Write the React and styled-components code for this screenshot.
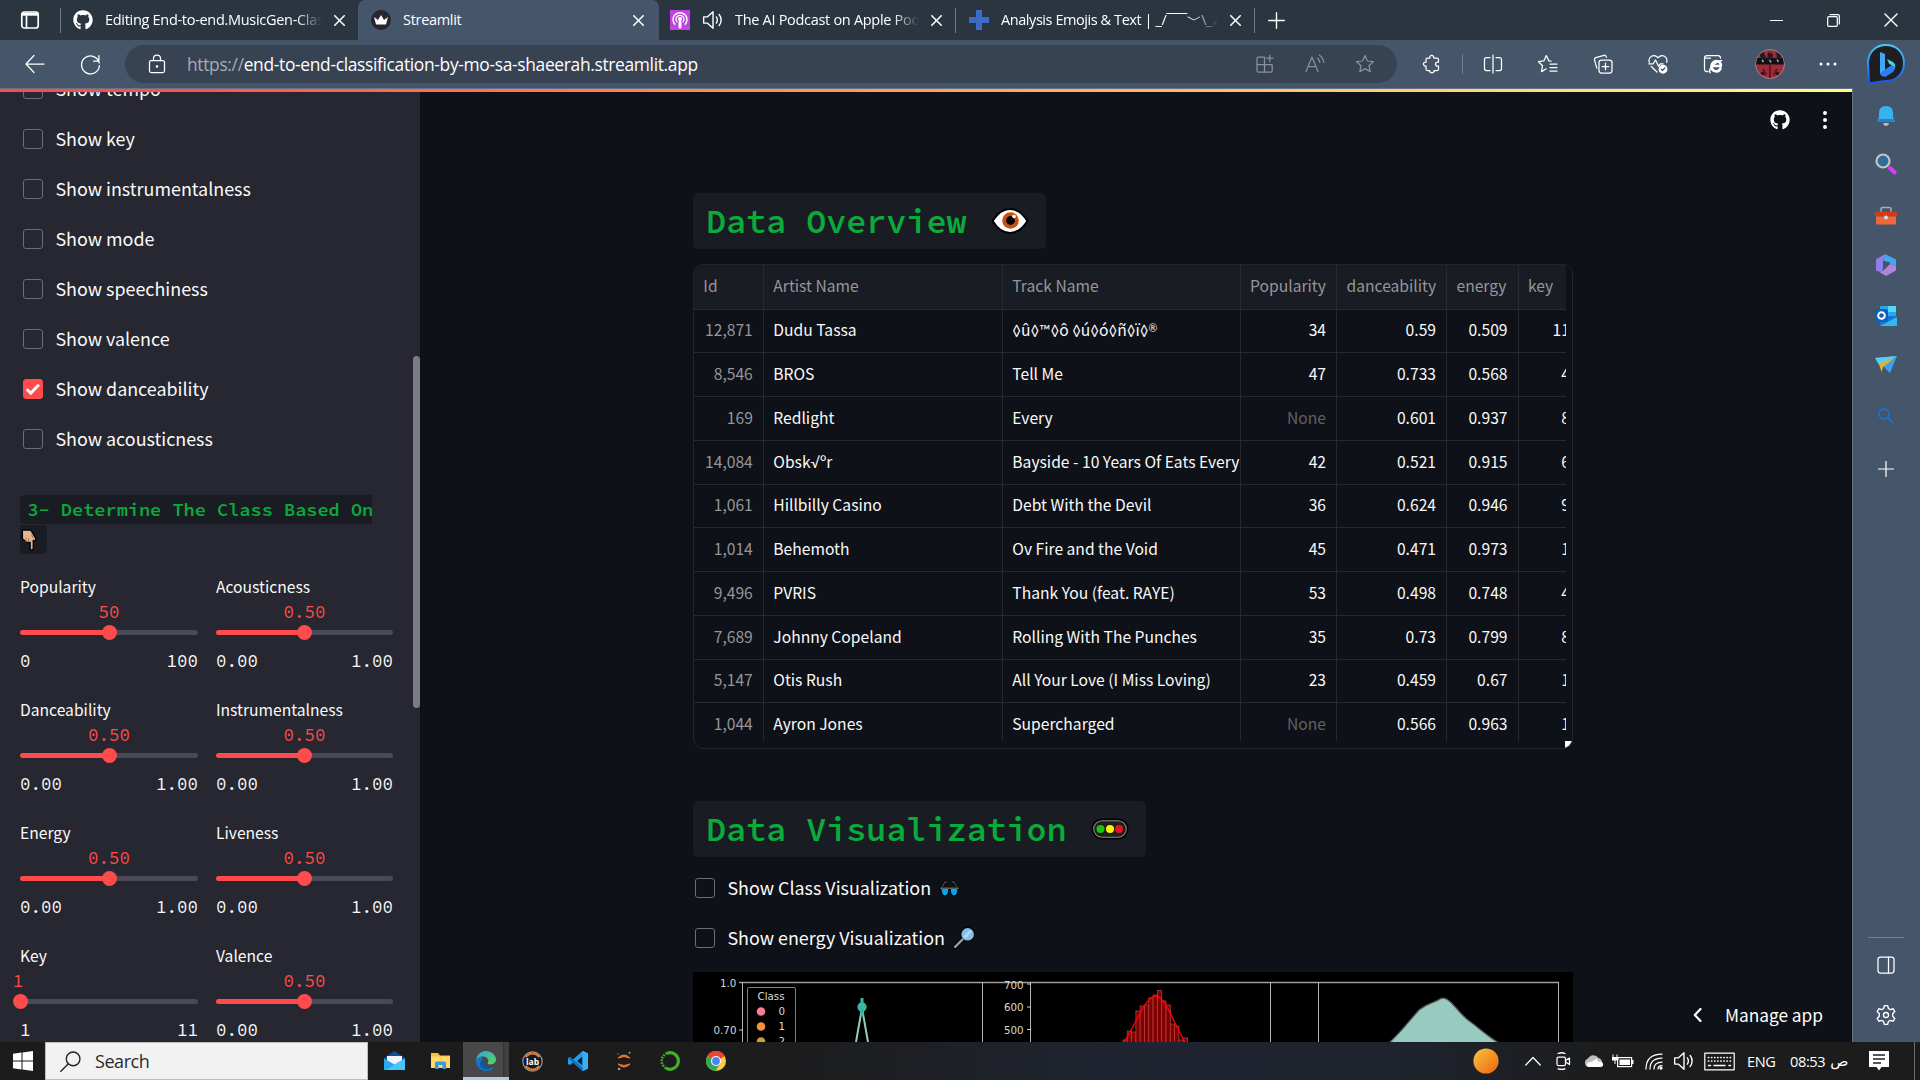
import React from "react";
import styled, { createGlobalStyle } from "styled-components";
import { FaGithub } from "react-icons/fa";

const ui = `"Open Sans", "Noto Sans", sans-serif`;
const sans = `"Noto Sans CJK SC", "Noto Sans", sans-serif`;
const mono = `"Source Code Pro", "Noto Sans Mono CJK SC", "Liberation Mono", monospace`;

const GlobalStyle = createGlobalStyle`
  * { box-sizing: border-box; }
  html, body { margin: 0; padding: 0; background: #0e1117; overflow: hidden; }
  svg { display: block; flex: none; }
`;

const Desktop = styled.div`
  width: 1920px;
  height: 1080px;
  display: grid;
  grid-template-rows: 40px 48px 954px 38px;
  overflow: hidden;
  font-family: ${ui};
  color: #fff;
`;

/* ---------- tab strip ---------- */
const TabStrip = styled.header`
  display: flex;
  align-items: stretch;
  background: #2b3540;
`;
const PinnedArea = styled.div`
  width: 60px;
  display: flex;
  align-items: center;
  padding-left: 20px;
`;
const Tab = styled.div`
  width: ${(p) => p.$w}px;
  padding-left: ${(p) => p.$pad}px;
  padding-right: ${(p) => p.$end}px;
  display: flex;
  align-items: center;
  background: ${(p) => (p.$active ? "#45566a" : "transparent")};
  border-radius: ${(p) => (p.$active ? "7px 7px 0 0" : "0")};
`;
const TabTitle = styled.span`
  flex: 1;
  min-width: 0;
  margin-left: ${(p) => p.$gap || 12}px;
  margin-right: 12px;
  height: 40px;
  line-height: 39px;
  font-size: 14.5px;
  letter-spacing: ${(p) => p.$ls || -0.3}px;
  white-space: nowrap;
  overflow: hidden;
  mask-image: ${(p) => (p.$fade ? "linear-gradient(90deg,#000 calc(100% - 26px),transparent)" : "none")};
`;
const Gap = styled.span`
  width: ${(p) => p.$w || 0}px;
  height: ${(p) => p.$h || 0}px;
  flex: none;
`;
const Separator = styled.i`
  width: 1px;
  height: ${(p) => p.$h || 25}px;
  align-self: center;
  background: #717c88;
`;
const StripFill = styled.div`
  flex: 1;
`;
const WindowButton = styled.div`
  width: ${(p) => p.$w || 57.5}px;
  display: flex;
  align-items: center;
  justify-content: center;
`;

/* ---------- toolbar ---------- */
const Toolbar = styled.nav`
  display: flex;
  align-items: center;
  background: #45566a;
`;
const ToolSlot = styled.div`
  width: ${(p) => p.$w || 55}px;
  height: 48px;
  display: flex;
  align-items: center;
  justify-content: center;
`;
const AddressBar = styled.div`
  width: 1272px;
  height: 38px;
  border-radius: 19px;
  background: #374253;
  display: flex;
  align-items: center;
  padding-left: 22px;
`;
const Url = styled.span`
  flex: 1;
  margin-left: 20px;
  font-size: 17.4px;
  line-height: 35px;
  letter-spacing: -0.33px;
  white-space: nowrap;
`;
const UrlScheme = styled.span`
  color: #a5adb6;
`;

/* ---------- page frame ---------- */
const Body = styled.div`
  display: grid;
  grid-template-columns: 1853px 67px;
  min-height: 0;
`;
const Page = styled.div`
  position: relative;
  display: flex;
  flex-direction: column;
  min-height: 0;
  border-top: 1px solid #66727f;
  border-right: 1px solid #66727f;
  background: #0e1117;
  overflow: hidden;
`;
const Decoration = styled.div`
  flex: none;
  height: 3px;
  background: linear-gradient(90deg, #ff4b4b, #ff4b4b 6%, #fffd80);
`;
const Columns = styled.div`
  flex: 1;
  min-height: 0;
  display: flex;
`;
const Sidebar = styled.aside`
  width: 420px;
  display: flex;
  justify-content: space-between;
  background: #262730;
  overflow: hidden;
  font-family: ${sans};
  color: #fafafa;
`;
const SidebarScroll = styled.div`
  width: 400px;
  padding-left: 20px;
  margin-top: -28px;
`;
const Scrollbar = styled.div`
  width: 7px;
  height: 352px;
  margin-top: 264px;
  border-radius: 4px;
  background: #7c7b83;
`;
const CheckRow = styled.label`
  height: 50px;
  display: flex;
  align-items: center;
  padding-left: ${(p) => (p.$main ? 2 : 3)}px;
  font-family: ${sans};
  font-size: 17.9px;
  line-height: 24px;
  white-space: nowrap;
  color: #fafafa;
`;
const CheckText = styled.span`
  margin: -3px 8px 0 12.4px;
`;
const Box = styled.span`
  width: 20px;
  height: 20px;
  border-radius: 3px;
  border: 1px solid ${(p) => (p.$on ? "#ff4b4b" : "#6c6d76")};
  background: ${(p) => (p.$on ? "#ff4b4b" : "transparent")};
  display: flex;
  align-items: center;
  justify-content: center;
`;
const SideHeading = styled.h3`
  margin: 31px 0 0;
  font-family: ${mono};
  font-size: 18.6px;
  font-weight: 600;
  line-height: 30px;
  color: #09ab3b;
`;
const SideCode = styled.div`
  width: ${(p) => p.$w}px;
  height: 29px;
  padding-left: ${(p) => p.$pad}px;
  margin-bottom: 1px;
  display: flex;
  align-items: center;
  background: #1a1c24;
  border-radius: ${(p) => p.$r};
  white-space: pre;
`;
const SliderGrid = styled.div`
  margin-top: 17px;
  display: grid;
  grid-template-columns: 178px 177px;
  column-gap: 18px;
`;
const Slider = styled.div`
  height: 123px;
  display: flex;
  flex-direction: column;
`;
const SliderLabel = styled.div`
  font-size: 15.65px;
  line-height: 31.6px;
  height: 30.4px;
`;
const SliderValue = styled.div`
  font-family: ${mono};
  font-size: 17.5px;
  line-height: 22px;
  height: 16.8px;
  color: #ff4b4b;
  width: 60px;
  text-align: center;
  margin-left: calc(${(p) => p.$at}% - ${(p) => (p.$at ? 30 : 32)}px);
`;
const Track = styled.div`
  height: 16px;
  margin-top: 6px;
  display: flex;
  align-items: center;
`;
const TrackPart = styled.i`
  height: 5px;
  width: ${(p) => p.$w}%;
  background: ${(p) => (p.$on ? "#ff4b4b" : "#494a55")};
  border-radius: 3px;
`;
const Thumb = styled.i`
  flex: none;
  width: 15px;
  height: 15px;
  margin: 0 -7.5px;
  border-radius: 50%;
  background: #ff4b4b;
  z-index: 1;
`;
const Range = styled.div`
  display: flex;
  justify-content: space-between;
  margin-top: 9px;
  font-family: ${mono};
  font-size: 17.5px;
  line-height: 24px;
`;

/* ---------- main ---------- */
const Main = styled.main`
  flex: 1;
  min-width: 0;
  display: flex;
  flex-direction: column;
  padding-left: 273px;
`;
const AppHeader = styled.div`
  flex: none;
  height: 101px;
  display: flex;
  justify-content: flex-end;
  gap: 16px;
  padding: 17px 20px 0 0;
`;
const HeaderIcon = styled.div`
  width: ${(p) => p.$w}px;
  height: 22px;
  display: flex;
  align-items: center;
  justify-content: center;
`;
const Title = styled.h2`
  flex: none;
  margin: 0;
  width: ${(p) => p.$w}px;
  height: 56px;
  padding: 0 17px 0 13px;
  display: flex;
  align-items: center;
  justify-content: space-between;
  background: #1a1c24;
  border-radius: 5px;
  font-family: ${mono};
  font-size: 33.4px;
  font-weight: 600;
  color: #09ab3b;
  white-space: nowrap;
`;
const TableFrame = styled.div`
  flex: none;
  position: relative;
  width: 880px;
  height: 485px;
  margin: 15px 0 52px;
  padding-right: 7px;
  border: 1px solid #23252c;
  border-radius: 10px;
  overflow: hidden;
`;
const Grid = styled.div`
  width: 872px;
  height: 476px;
  overflow: hidden;
  display: grid;
  grid-template-columns: 70px 239px 237.8px 96.4px 110px 71.5px 47.3px;
  grid-template-rows: 44.6px repeat(10, 43.75px);
  font-family: ${sans};
  font-size: 15.65px;
`;
const Cell = styled.div`
  display: flex;
  align-items: center;
  justify-content: ${(p) => (p.$num ? "flex-end" : "flex-start")};
  padding: 0 ${(p) => (p.$last ? 0 : p.$num ? 10.2 : 0)}px 2.4px ${(p) => (p.$last && p.$num ? 0 : 9.3)}px;
  margin-right: ${(p) => (p.$last && p.$num ? -4 : 0)}px;
  border-right: ${(p) => (p.$last ? "none" : "1px solid #27292f")};
  border-bottom: 1px solid #27292f;
  background: ${(p) => (p.$head ? "#1a1c24" : "transparent")};
  color: ${(p) => (p.$head || p.$dim ? "#95969b" : p.$none ? "#5f6167" : "#fafafa")};
  white-space: pre;
  overflow: hidden;
`;
const Sym = styled.span`
  font-family: "Lato", "Open Sans", sans-serif;
  font-size: ${(p) => (p.$raised ? 10.5 : 15)}px;
  vertical-align: ${(p) => (p.$raised ? "4px" : "baseline")};
  line-height: 1;
`;
const ResizeCorner = styled.i`
  position: absolute;
  right: 0;
  bottom: 0;
  width: 7px;
  height: 7px;
  background: linear-gradient(135deg, #fff 60%, transparent 60%);
`;
const Figure = styled.div`
  flex: none;
  margin-top: 9px;
  width: 880px;
  height: 70px;
  background: #000;
  overflow: hidden;
`;
const ManageApp = styled.div`
  position: absolute;
  right: 29px;
  bottom: 12px;
  height: 30px;
  display: flex;
  align-items: center;
  gap: 23px;
  font-family: ${sans};
  font-size: 17.3px;
  line-height: 28px;
`;

/* ---------- right rail ---------- */
const Rail = styled.aside`
  display: flex;
  flex-direction: column;
  align-items: center;
  padding-right: 1px;
  background: #45566a;
`;
const RailItem = styled.div`
  height: ${(p) => p.$h || 24}px;
  margin-top: ${(p) => p.$mt || 0}px;
  display: flex;
  align-items: center;
`;
const RailFill = styled.div`
  flex: 1;
`;
const RailRule = styled.i`
  width: 36px;
  height: 1px;
  background: #76838f;
`;

/* ---------- taskbar ---------- */
const Taskbar = styled.footer`
  display: flex;
  align-items: stretch;
  background: linear-gradient(90deg, #1c1c1c 0, #1c1c1c 40%, #1f2430 58%, #1e232e 72%, #1c1c1c 84%);
`;
const TaskItem = styled.div`
  flex: none;
  width: ${(p) => p.$w || 46}px;
  display: flex;
  align-items: center;
  justify-content: center;
  background: ${(p) => (p.$active ? "linear-gradient(90deg,#484848 40px,#303030 40px,#404040 42px)" : "transparent")};
  border-bottom: ${(p) => (p.$active ? "3px solid #a9cbee" : "0 solid transparent")};
  padding-top: ${(p) => (p.$active ? 3 : 0)}px;
`;
const SearchField = styled.div`
  width: 323px;
  display: flex;
  align-items: center;
  gap: 14px;
  padding-left: 14px;
  background: #f2f2f2;
  border: 1px solid #bdbdbd;
  color: #2b2b2b;
  font-size: 18px;
  letter-spacing: -0.45px;
`;
const TrayText = styled.span`
  flex: none;
  width: ${(p) => p.$w}px;
  display: flex;
  align-items: center;
  gap: 5px;
  font-size: 14.6px;
  letter-spacing: -0.4px;
  white-space: nowrap;
`;
const Arabic = styled.span`
  font-family: "DejaVu Sans", sans-serif;
  font-size: 15px;
`;
const Notifications = styled.div`
  display: flex;
  align-items: center;
  margin-right: 25px;
`;
const ShowDesktop = styled.div`
  width: 6px;
  border-left: 1px solid #6b6b6b;
`;

/* ---------- icons ---------- */
const Ico = ({ s = 20, w, vb = "0 0 20 20", sw = 1.25, c = "#fff", children }) => (
  <svg width={w || s} height={s} viewBox={vb} fill="none" stroke={c} strokeWidth={sw} strokeLinecap="round" strokeLinejoin="round">
    {children}
  </svg>
);
const CloseX = ({ s = 11, sw = 1.4 }) => <Ico s={s} vb="0 0 10 10" sw={sw}><path d="M.7.7l8.6 8.6M9.3.7L.7 9.3" /></Ico>;
const Speaker = () => (
  <Ico s={22}><path d="M1.5 7.2v5.6h3.3l5.2 4.7v-15L4.8 7.2zM13 7.2c1.2 1.7 1.2 4 0 5.6M15.6 5c2.4 2.9 2.4 7.1 0 10" /></Ico>
);
const GridPlus = () => (
  <Ico c="#8a919b"><path d="M2 4.2q0-1.2 1.2-1.2H9.5v15H3.2Q2 18 2 16.800zM2 10.500h15.200M9.500 10.500h6.500q1.200 0 1.200 1.200v5.100q0 1.200-1.200 1.200H9.500M14.800 1v6.500M11.500 4.200h6.500" /></Ico>
);
const ReadAloud = () => <Ico c="#8a919b"><path d="M1 17.500L7 3l6 14.500M3.200 12.500h7.600M12.500 4.200q2 1.500 2.400 4.300M14.500 1.200q3.700 2.600 4.300 7.300" /></Ico>;
const starPath = "M10 1.600l2.500 5.400 5.900.7-4.400 4 1.200 5.900-5.200-3-5.200 3L6 11.700l-4.400-4 5.900-.7z";
const Star = () => <Ico c="#8a919b"><path d={starPath} /></Ico>;
const Puzzle = () => (
  <Ico><path d="M5 4h2.800C7 .6 12.400.6 11.800 4H15q1.500 0 1.500 1.500v2.700c-4-.8-4 4.600 0 3.800v3q0 1.500-1.500 1.500h-3c.5 3-4.700 3-4.200 0H5.500Q4 16.500 4 15v-3C.6 12.600.6 7.600 4 8.200V5.500Q4 4 5.500 4z" /></Ico>
);
const Split = () => <Ico><path d="M7 3.500H3.500Q1.500 3.500 1.500 5.500v9q0 2 2 2H7M13 3.500h3.500q2 0 2 2v9q0 2-2 2H13M10 1v18" /></Ico>;
const FavList = () => <Ico><path d="M13 7.100L10.800 6.900 8.300 1.600 5.800 6.900l-5.300.8 4 4-1 5.900L8.300 14.800M12 10h7M12 13.500h7M12 17h7" /></Ico>;
const Collections = () => (
  <Ico><rect x="6" y="6" width="13" height="13" rx="2.500" /><path d="M12.500 9.200v6.600M9.200 12.500h6.600M3.800 14.200L1.500 5.800q-.4-1.700 1.300-2.200L11 1.300q1.700-.4 2.100 1.200l.3.800" /></Ico>
);
const Health = () => (
  <Ico><path d="M1.300 8.300C-.3 2.500 6-.6 10 3.700 14-.6 20.300 2.500 18.700 8.300M.8 9.800h4.400L7.500 6l3 6.300 1.700-2.500h3M3.300 12.500L9 18" /><circle cx="15" cy="15.200" r="3.800" fill="#fff" /><path d="M13.300 15.300l1.200 1.200 2.300-2.500" stroke="#45566a" /></Ico>
);
const IeMode = () => (
  <Ico><path d="M5 17.500H4Q1.500 17.500 1.500 15V4Q1.500 1.500 4 1.500H15Q17.500 1.500 17.500 4M1.500 4.200h6" /><path d="M8.500 12h9.300C18.300 5.600 8.900 5.600 8.500 12c0 6.300 7.200 6.800 9 2.500" strokeWidth="2.700" /><path d="M7 18.500c-2-2.200 4-10.500 11.500-12" strokeWidth="1.600" /></Ico>
);
const Bing = () => (
  <svg width="40" height="42" viewBox="0 0 40 42">
    <defs><linearGradient id="bg1" x1="0" y1="0" x2="0" y2="1"><stop offset="0" stopColor="#45cdf5" /><stop offset="1" stopColor="#1b55e8" /></linearGradient></defs>
    <path d="M3 40l-1-20C2 9 10 2 20 2s18 7 18 18-8 18-18 18c-5 0-8 2-17 2z" fill="#1f1f22" stroke="url(#bg1)" strokeWidth="2" />
    <path d="M14 9l5 2V27L14 31z" fill="#41a7f4" /><path d="M14 31l5-4.500 9.500-6c2 5.500-.5 8-3.500 9.800L20 33.500q-4 1-6-2.500z" fill="#2f7df0" /><path d="M21 16l6 3q2.300 1.500 2.300 5l-6-3z" fill="#46d7d8" />
  </svg>
);
const Avatar = () => (
  <svg width="30" height="30" viewBox="0 0 30 30">
    <defs><clipPath id="av"><circle cx="15" cy="15" r="15" /></clipPath></defs>
    <g clipPath="url(#av)">
      <path d="M0 0h30v30H0z" fill="#a02c3a" /><path d="M0 9h30v6.500H0z" fill="#131116" />
      <path d="M4 6l4-4 3 6-3 4zM13 3l5 2-1 7-5-1zM21 3l6 3-1 5-4-1z" fill="#251a20" />
      <path d="M7 11l1.500 2M14.500 11l1.500 2.500M22 10.500l1.500 2.500" stroke="#c9bcc0" strokeWidth="1.300" />
      <path d="M8 20l3 6M22 20l-3 6M15 16v14" stroke="#5b1822" strokeWidth="2" /><path d="M6 23h3v3H6zM21 23h3v3h-3z" fill="#3a141c" />
    </g>
    <circle cx="15" cy="15" r="14.500" fill="none" stroke="#8b8f98" />
  </svg>
);
const Gear = () => (
  <Ico s={22}><circle cx="10" cy="10" r="2.300" /><path d="M8.500 1.500h3l.7 2.600 1.700 1 2.600-.8 1.500 2.600-1.900 1.900v2.400l1.900 1.900-1.500 2.600-2.600-.8-1.700 1-.7 2.600h-3l-.7-2.600-1.700-1-2.600.8L2 13.100l1.900-1.900V8.800L2 6.900l1.500-2.600 2.600.8 1.700-1z" /></Ico>
);

const Eye = () => (
  <svg width="38" height="28" viewBox="0 0 38 28">
    <path d="M1.500 14Q9 2 19 2t17.500 12Q29 26 19 26T1.500 14z" fill="#fff" stroke="#000" strokeWidth="2.200" />
    <circle cx="19.500" cy="13.500" r="8.300" fill="#ca5010" /><circle cx="19.500" cy="13.500" r="4.400" fill="#000" /><circle cx="23" cy="9.500" r="1.800" fill="#fff" />
  </svg>
);
const Traffic = () => (
  <svg width="38" height="22" viewBox="0 0 38 22">
    <rect x=".5" y=".5" width="37" height="21" rx="10.500" fill="#000" /><rect x="2.700" y="2.700" width="32.600" height="16.600" rx="8.300" fill="#1f1f1f" stroke="#8b8b8b" strokeWidth="1.100" />
    <circle cx="9.500" cy="11" r="4" fill="#16c60c" /><circle cx="19" cy="11" r="4" fill="#fff100" /><circle cx="28" cy="11" r="4" fill="#e81224" />
  </svg>
);
const Glasses = () => (
  <svg width="21" height="17" viewBox="0 0 21 17">
    <path d="M2.500 8L6 2h2M18.500 8L15 2h-2" stroke="#000" strokeWidth="3" fill="none" /><path d="M2.500 8L6 2h2M18.500 8L15 2h-2" stroke="#4a4a4a" strokeWidth="1.300" fill="none" />
    <path d="M0 7h21v3h-1l-1.500 6H13l-2-5h-1l-2 5H3L1 10H0z" fill="#000" /><path d="M2.500 9h6.800Q9 15.500 6 15.500T2.500 9zM11.700 9h6.800Q18 15.500 15 15.500T11.700 9z" fill="#00a4ef" /><path d="M1 8.200h19" stroke="#666" strokeWidth="1.500" />
  </svg>
);
const Magnifier = ({ s = 22 }) => (
  <svg width={s} height={s} viewBox="0 0 21 21">
    <path d="M2 19l7-7" stroke="#000" strokeWidth="4.500" strokeLinecap="round" /><circle cx="14" cy="7" r="6.900" fill="#000" />
    <path d="M2 19l7-7" stroke="#9a9a9a" strokeWidth="2.300" strokeLinecap="round" /><circle cx="14" cy="7" r="6" fill="#83beec" /><path d="M10 9l6-6 2 1-6 7z" fill="#b5daf4" />
  </svg>
);
const PointDown = () => (
  <svg width="17" height="22" viewBox="0 0 16 21">
    <path d="M1.200 1H9l1.500 2 3.800 6.500-1.500 2.200-1.200-.8V19q-1.600 2.300-3 0v-6.300l-2.500.5L1.200 9.500z" fill="#e3b48f" stroke="#000" strokeWidth="1.300" strokeLinejoin="round" />
    <path d="M4.500 8.500v4M7 9v3.500M10 5l1.500 4" stroke="#a5714c" strokeWidth=".9" />
  </svg>
);

const checks = [["tempo"], ["key"], ["instrumentalness"], ["mode"], ["speechiness"], ["valence"], ["danceability", true], ["acousticness"]];
const sliders = [
  ["Popularity", "50", 50, "0", "100"], ["Acousticness", "0.50", 50, "0.00", "1.00"],
  ["Danceability", "0.50", 50, "0.00", "1.00"], ["Instrumentalness", "0.50", 50, "0.00", "1.00"],
  ["Energy", "0.50", 50, "0.00", "1.00"], ["Liveness", "0.50", 50, "0.00", "1.00"],
  ["Key", "1", 0, "1", "11"], ["Valence", "0.50", 50, "0.00", "1.00"],
];
const heads = ["Id", "Artist Name", "Track Name", "Popularity", "danceability", "energy", "key"];
const rows = [
  ["12,871", "Dudu Tassa", "◊û◊™◊ô ◊ú◊ó◊ñ◊ï◊®", "34", "0.59", "0.509", "11"],
  ["8,546", "BROS", "Tell Me", "47", "0.733", "0.568", "4"],
  ["169", "Redlight", "Every", "None", "0.601", "0.937", "8"],
  ["14,084", "Obsk√ºr", "Bayside - 10 Years Of Eats Every", "42", "0.521", "0.915", "6"],
  ["1,061", "Hillbilly Casino", "Debt With the Devil", "36", "0.624", "0.946", "9"],
  ["1,014", "Behemoth", "Ov Fire and the Void", "45", "0.471", "0.973", "1"],
  ["9,496", "PVRIS", "Thank You (feat. RAYE)", "53", "0.498", "0.748", "4"],
  ["7,689", "Johnny Copeland", "Rolling With The Punches", "35", "0.73", "0.799", "8"],
  ["5,147", "Otis Rush", "All Your Love (I Miss Loving)", "23", "0.459", "0.67", "1"],
  ["1,044", "Ayron Jones", "Supercharged", "None", "0.566", "0.963", "1"],
];
const bars = [68, 59, 60, 39, 34, 33, 26, 23, 18, 29, 33, 52, 54, 68, 66];
const withSymbols = (v) => v.split(/([◊√™®])/).map((t, i) => (i % 2 ? <Sym key={i} $raised={t === "®"}>{t}</Sym> : t));

const Chart = () => (
  <svg width="880" height="70" viewBox="0 0 880 70" fontFamily="DejaVu Sans" fontSize="10.300" fill="#d8d8d8">
    <path d="M46 10.500h820" stroke="#9c9c9c" strokeWidth="1.400" />
    <path d="M49.500 10v60M289.500 10v60M337.500 10v60M577.500 10v60M625.500 10v60M865.500 10v60" stroke="#b5b5b5" />
    <path d="M46 58h4M334 12h4M334 35h4M334 57.500h4" stroke="#cfcfcf" />
    <text x="27" y="15">1.0</text><text x="20.500" y="62">0.70</text>
    <text x="311" y="16.500">700</text><text x="311" y="39">600</text><text x="311" y="61.500">500</text>
    <path d="M54.500 72V17q0-1.500 1.500-1.500h45q1.500 0 1.500 1.500v55" fill="none" stroke="#7d7d7d" />
    <text x="64.500" y="28">Class</text>
    {["#f77f8f", "#f79239", "#c4a336"].map((c, i) => (
      <g key={c}><circle cx="68" cy={39.500 + i * 15} r="4.300" fill={c} /><text x="85.500" y={42.500 + i * 15}>{i}</text></g>
    ))}
    <path d="M163 70L169 36 175 70" stroke="#8fd0c0" strokeWidth="2" fill="none" /><path d="M169 26v18" stroke="#37b6a0" strokeWidth="3" /><circle cx="169" cy="35" r="4.700" fill="#37b6a0" />
    {bars.map((y, i) => <rect key={i} x={430 + i * 4.300} y={y === 18 ? 18.500 : y} width="4.300" height="60" fill="#800000" stroke="#b04040" strokeWidth=".8" />)}
    <path d="M431 70C446 46 453 24 463 24C472 24 480 50 492 70" stroke="#f00" strokeWidth="1.400" fill="none" />
    <path d="M696 71C708 60 717 48 726 38C735 31 743 30 747 27Q751 25 755 28C762 33 766 41 775 48C786 56 794 64 806 71z" fill="#97cbc0" stroke="#565656" strokeWidth="1.300" />
  </svg>
);

const Check = ({ label, on, main, icon }) => (
  <CheckRow $main={main}>
    <Box $on={on}>{on && <Ico s={16} vb="0 0 16 16" sw={3}><path d="M1.800 8.200l4 4 8-8.400" strokeLinecap="butt" strokeLinejoin="miter" /></Ico>}</Box>
    <CheckText>{label}</CheckText>
    {icon}
  </CheckRow>
);

export default function App() {
  return (
    <Desktop>
      <GlobalStyle />
      <TabStrip>
        <PinnedArea>
          <Ico s={20} sw={1.700}><rect x="1.800" y="2" width="16.400" height="16" rx="2.500" /><path d="M2 4.200h16" strokeWidth="3" strokeLinecap="butt" /><path d="M6.500 6v12" /></Ico>
        </PinnedArea>
        <Separator />
        <Tab $w={297} $pad={12} $end={13}>
          <FaGithub size={20} />
          <TabTitle $fade>Editing End-to-end.MusicGen-Classification</TabTitle>
          <CloseX />
        </Tab>
        <Tab $w={301} $pad={13} $end={15} $active>
          <svg width="20" height="20" viewBox="0 0 20 20"><circle cx="10" cy="10" r="10" fill="#262730" /><path d="M3 7l4 3 3-5 3 5 4-3-2 7.500H5z" fill="#fff" /></svg>
          <TabTitle>Streamlit</TabTitle>
          <CloseX />
        </Tab>
        <Tab $w={296} $pad={11} $end={13}>
          <svg width="20" height="20" viewBox="0 0 20 20" fill="none" stroke="#fff" strokeWidth="1.400"><rect width="20" height="20" fill="#c244e0" stroke="none" /><path d="M5.200 14.800a7 7 0 1 1 9.600 0M7.200 12a3.900 3.900 0 1 1 5.600 0" /><circle cx="10" cy="9" r="1.300" fill="#fff" /><path d="M10 12v5" strokeWidth="3" strokeLinecap="round" /></svg>
          <Gap $w={12} />
          <Speaker />
          <TabTitle $gap={11} $fade>The AI Podcast on Apple Podcasts</TabTitle>
          <CloseX />
        </Tab>
        <Separator />
        <Tab $w={298} $pad={13} $end={13}>
          <svg width="20" height="20" viewBox="0 0 20 20"><path d="M7 0h6v7h7v6h-7v7H7v-7H0V7h7z" fill="#3b6bc6" /></svg>
          <TabTitle $fade $ls={-0.43}>Analysis Emojis &amp; Text | _/‾‾‾﹀\_ﾉ</TabTitle>
          <CloseX />
        </Tab>
        <Separator />
        <WindowButton $w={43}><Ico s={17} vb="0 0 18 18" sw={1.500}><path d="M9 .8v16.400M.8 9h16.400" /></Ico></WindowButton>
        <StripFill />
        <WindowButton><Ico s={13} vb="0 0 13 13" sw={1.200}><path d="M.5 6.500h12" /></Ico></WindowButton>
        <WindowButton><Ico s={13} vb="0 0 13 13" sw={1.200}><rect x=".7" y="2.700" width="9.600" height="9.600" rx="1" /><path d="M3 .7h8q1.300 0 1.300 1.300v8" /></Ico></WindowButton>
        <WindowButton><CloseX s={14} sw={1} /></WindowButton>
      </TabStrip>

      <Toolbar>
        <ToolSlot $w={69}><Ico s={20}><path d="M19 10H1M9 1.500L1 10l8 8.500" /></Ico></ToolSlot>
        <ToolSlot $w={42}><Ico s={21}><path d="M18.300 8.500A8.500 8.500 0 1 0 18.500 11M18 1.500v5.300h-5" /></Ico></ToolSlot>
        <Gap $w={14} />
        <AddressBar>
          <Ico s={20} w={20}><rect x="2.500" y="6.500" width="15" height="12" rx="1.800" /><path d="M6.500 6.500V4.500q0-3.500 3.500-3.500t3.500 3.500v2" /><circle cx="10" cy="12.500" r=".7" fill="#fff" /></Ico>
          <Url><UrlScheme>https://</UrlScheme>end-to-end-classification-by-mo-sa-shaeerah.streamlit.app</Url>
          <ToolSlot $w={50}><GridPlus /></ToolSlot>
          <ToolSlot $w={50}><ReadAloud /></ToolSlot>
          <ToolSlot $w={50}><Star /></ToolSlot>
          <Gap $w={7} />
        </AddressBar>
        <Gap $w={8} />
        <ToolSlot $w={54}><Puzzle /></ToolSlot>
        <ToolSlot $w={6}><Separator $h={20} /></ToolSlot>
        <ToolSlot><Split /></ToolSlot>
        <ToolSlot><FavList /></ToolSlot>
        <ToolSlot><Collections /></ToolSlot>
        <ToolSlot><Health /></ToolSlot>
        <ToolSlot><IeMode /></ToolSlot>
        <ToolSlot $w={59}><Avatar /></ToolSlot>
        <ToolSlot $w={57}><Ico s={18} vb="0 0 18 18" c="none"><g fill="#fff"><circle cx="2" cy="9" r="1.500" /><circle cx="9" cy="9" r="1.500" /><circle cx="16" cy="9" r="1.500" /></g></Ico></ToolSlot>
        <ToolSlot $w={60}><Bing /></ToolSlot>
      </Toolbar>

      <Body>
        <Page>
          <Decoration />
          <Columns>
            <Sidebar>
              <SidebarScroll>
                {checks.map(([l, on]) => <Check key={l} label={`Show ${l}`} on={on} />)}
                <SideHeading>
                  <SideCode $w={352} $pad={7.4} $r="5px 0 0 5px">3- Determine The Class Based On</SideCode>
                  <SideCode $w={27} $pad={1} $r="0 5px 5px 0"><PointDown /></SideCode>
                </SideHeading>
                <SliderGrid>
                  {sliders.map(([l, v, at, a, b]) => (
                    <Slider key={l}>
                      <SliderLabel>{l}</SliderLabel>
                      <SliderValue $at={at}>{v}</SliderValue>
                      <Track><TrackPart $on $w={at} /><Thumb /><TrackPart $w={100 - at} /></Track>
                      <Range><span>{a}</span><span>{b}</span></Range>
                    </Slider>
                  ))}
                </SliderGrid>
              </SidebarScroll>
              <Scrollbar />
            </Sidebar>
            <Main>
              <AppHeader>
                <HeaderIcon $w={44}><FaGithub size={20} /></HeaderIcon>
                <HeaderIcon $w={14}><Ico s={18} vb="0 0 18 18" c="none"><g fill="#fff"><circle cx="9" cy="2" r="2" /><circle cx="9" cy="9" r="2" /><circle cx="9" cy="16" r="2" /></g></Ico></HeaderIcon>
              </AppHeader>
              <Title $w={353}><span>Data Overview</span><Eye /></Title>
              <TableFrame>
                <Grid>
                  {heads.map((h, i) => <Cell key={h} $head $last={i === 6}>{h}</Cell>)}
                  {rows.map((r) => r.map((v, i) => (
                    <Cell key={r[0] + i} $num={i === 0 || i > 2} $dim={i === 0} $none={v === "None"} $last={i === 6}><span>{withSymbols(v)}</span></Cell>
                  )))}
                </Grid>
                <ResizeCorner />
              </TableFrame>
              <Title $w={453}><span>Data Visualization</span><Traffic /></Title>
              <Gap $h={6} />
              <Check main label="Show Class Visualization" icon={<Glasses />} />
              <Check main label="Show energy Visualization" icon={<Magnifier />} />
              <Figure><Chart /></Figure>
            </Main>
          </Columns>
          <ManageApp>
            <Ico s={14} w={9} vb="0 0 9 14" sw={2.200}><path d="M7.500 1L1.800 7l5.700 6" /></Ico>
            <span>Manage app</span>
          </ManageApp>
        </Page>
        <Rail>
          <RailItem $mt={16}><svg width="20" height="22" viewBox="0 0 20 22"><path d="M1 16.500L3 12V8q0-7 7-7t7 7v4l2 4.500z" fill="#35b3ee" /><path d="M1 16.500L2 14h16l1 2.500z" fill="#1e7fe0" /><path d="M7 18h6q-.5 3-3 3t-3-3z" fill="#b9b9b9" /></svg></RailItem>
          <RailItem $mt={24}><svg width="22" height="22" viewBox="0 0 22 22"><path d="M15 15l4.500 4.500" stroke="#d53df0" strokeWidth="4" strokeLinecap="round" /><circle cx="8" cy="8" r="6.500" fill="#2e6e98" stroke="#c4c4c4" strokeWidth="2.200" /></svg></RailItem>
          <RailItem $mt={28}><svg width="24" height="20" viewBox="0 0 24 20"><path d="M7 6V3q0-1.500 1.500-1.500h7Q17 1.500 17 3v3" fill="none" stroke="#aaa" strokeWidth="1.600" /><rect x="1" y="5.500" width="22" height="5" rx="1" fill="#d23b14" /><path d="M2 10.500h20v7q0 1-1 1H3q-1 0-1-1z" fill="#f0673c" /><circle cx="12" cy="11.500" r="2" fill="#ddd" /></svg></RailItem>
          <RailItem $mt={25}><svg width="22" height="22" viewBox="0 0 22 22"><path d="M10 0l11 5.500V12l-6-2V8.500L8 6.500z" fill="#45a5ee" /><path d="M10 0L1 5.500v11l5.500 2L8 14.500V6.500z" fill="#8f7fe6" /><path d="M21 12v4.500L11 22l-6-3.500L10 15l5-5z" fill="#ae84dc" /></svg></RailItem>
          <RailItem $mt={26.5}><svg width="22" height="22" viewBox="0 0 22 22"><rect x="5" y="1" width="16" height="19" rx="1" fill="#28a8ea" /><path d="M5 11h16v10H5z" fill="#0f78d4" /><path d="M13 1h8v6h-8z" fill="#50d9ff" /><path d="M5 21l17-9v9z" fill="#35b8f1" /><rect x="0" y="4" width="13" height="13" rx="1.500" fill="#0b62b8" /><circle cx="6.500" cy="10.500" r="3.300" fill="none" stroke="#fff" strokeWidth="1.900" /></svg></RailItem>
          <RailItem $mt={25.5}><svg width="22" height="18" viewBox="0 0 22 18"><path d="M0 2L22 0 15 17l-5-5z" fill="#3f9ff0" /><path d="M0 2L22 0 4 9z" fill="#5ccdf6" /><path d="M4 8L20 1.500 8 11l-1.500 5z" fill="#f0b020" /></svg></RailItem>
          <RailItem $mt={26.5}><Ico s={16} vb="0 0 16 16" c="#1374cf" sw={1.800}><circle cx="6" cy="6" r="5" /><path d="M9.800 9.800l5 5" /></Ico></RailItem>
          <RailItem $mt={29.5}><Ico s={16} vb="0 0 16 16" sw={1.200}><path d="M8 .5v15M.5 8h15" /></Ico></RailItem>
          <RailFill />
          <RailRule />
          <RailItem $h={54}><Ico s={18} vb="0 0 18 18"><rect x="1" y="1" width="16" height="16" rx="2.500" /><path d="M11.500 1v16" /></Ico></RailItem>
          <RailItem $h={46}><Gear /></RailItem>
          <RailItem $h={4} />
        </Rail>
      </Body>

      <Taskbar>
        <TaskItem $w={45}><svg width="20" height="20" viewBox="0 0 20 20" fill="#fff"><path d="M0 2.800l8.500-1.200v7.900H0zM9.500 1.400L20 0v9.500H9.500zM0 10.500h8.500v7.900L0 17.200zM9.500 10.500H20V20L9.500 18.600z" /></svg></TaskItem>
        <SearchField>
          <Ico s={21} c="#222" sw={1.300}><circle cx="12.500" cy="7.500" r="6.500" /><path d="M8 12.200L.8 19.200" /></Ico>
          Search
        </SearchField>
        <TaskItem $w={52}><svg width="21" height="20" viewBox="0 0 21 20"><path d="M0 7l10.500-7L21 7v5H0z" fill="#0f4f9e" /><path d="M3 5h15v9H3z" fill="#f1f5fb" /><path d="M0 7.500l10.500 6L21 7.500V19H0z" fill="#29a8ea" /><path d="M21 7.500V19H2z" fill="#47c5f7" /></svg></TaskItem>
        <TaskItem $w={41}><svg width="19" height="18" viewBox="0 0 19 18"><path d="M0 1h7l2 2.500h10V16H0z" fill="#f7c13c" /><path d="M0 4.500h19V16H0z" fill="#ffda6b" /><path d="M4 17v-6q0-1.500 1.500-1.500h8q1.500 0 1.500 1.500v6h-3.500v-4h-4v4z" fill="#3a96dd" /></svg></TaskItem>
        <Gap $w={2} />
        <TaskItem $active><svg width="20" height="20" viewBox="0 0 20 20"><defs><linearGradient id="eg" x1="0" y1="0" x2="1" y2="1"><stop offset="0" stopColor="#2aa9e0" /><stop offset="1" stopColor="#5ed55a" /></linearGradient></defs><path d="M0 9.500C1 3.500 5 0 10 0s10 4 10 8.300c0 3.200-2.500 5.200-5.700 5.200-2.600 0-3-1.200-2.300-2.300C13.500 8 10 5.500 7 5.500S1 7.500 0 9.500z" fill="url(#eg)" /><path d="M0 9.500C1 6.500 4 5.300 6.800 5.500 4.800 8 5.500 17 13.500 17c2 0 3.500-.5 5-1.300C17 18.500 14 20 10 20 4.500 20 0 15.500 0 9.500z" fill="#1477c9" /><path d="M8 8.500c-1.500 5 2.500 9 8 8-4 3.500-12 2.500-12-4 0-2 1.500-3.500 4-4z" fill="#0c5aa0" /></svg></TaskItem>
        <TaskItem><svg width="21" height="21" viewBox="0 0 21 21"><circle cx="10.500" cy="10.500" r="9.700" fill="#191919" stroke="#9a9a9a" strokeWidth="1.200" /><path d="M3.500 6Q10.500-1 17.500 6M3.500 15q7 7 14 0" stroke="#e8762c" strokeWidth="1.800" fill="none" /><text x="10.500" y="13.800" fontSize="8.500" fontWeight="700" textAnchor="middle" fill="#fff" fontFamily="Open Sans">lab</text></svg></TaskItem>
        <TaskItem><svg width="20" height="20" viewBox="0 0 20 20"><path d="M14.500 0L20 2.300v15.400L14.500 20 5 11.500 2 14 0 13V7l2-1 3 2.500zM14.500 5.500L9 10l5.500 4.500z" fillRule="evenodd" fill="#1f9cf0" /><path d="M14.500 0L20 2.300v15.400L14.500 20z" fill="#35aef5" /><path d="M0 7l2-1 13 11-.500 3z" fill="#0d6fb8" /></svg></TaskItem>
        <TaskItem><svg width="18" height="20" viewBox="0 0 18 20"><path d="M3 7q6-6 12 0-6-3-12 0zM3 13q6 6 12 0-6 3-12 0z" fill="#f37726" stroke="#f37726" /><circle cx="14.500" cy="1.800" r="1" fill="#999" /><circle cx="4" cy="18" r="1.300" fill="#999" /><circle cx="3" cy="3" r=".8" fill="#777" /></svg></TaskItem>
        <TaskItem><svg width="22" height="22" viewBox="0 0 22 22" fill="none" stroke="#43b02a"><path d="M8 3.200a8.300 8.300 0 1 1-1 15" strokeWidth="3.200" /><path d="M8 3.200a8.300 8.300 0 0 0-1 15" strokeWidth="2.600" strokeDasharray="1.600 1.200" /></svg></TaskItem>
        <TaskItem><svg width="20" height="20" viewBox="0 0 20 20"><circle cx="10" cy="10" r="10" fill="#ffcd40" /><path d="M10 10L1.300 5A10 10 0 0 1 18.700 5z" fill="#ea4335" /><path d="M1.300 5A10 10 0 0 0 9.500 20L14.300 12.500 10 10z" fill="#34a853" /><path d="M10 5h8.700L10 10z" fill="#ea4335" /><circle cx="10" cy="10" r="5" fill="#fff" /><circle cx="10" cy="10" r="3.900" fill="#4285f4" /></svg></TaskItem>
        <StripFill />
        <TaskItem $w={48}><svg width="26" height="26" viewBox="0 0 26 26"><defs><linearGradient id="sun" x1="0" y1="0" x2="1" y2="1"><stop offset=".15" stopColor="#f5b83a" /><stop offset=".9" stopColor="#f06c14" /></linearGradient></defs><circle cx="13" cy="13" r="12.600" fill="url(#sun)" /></svg></TaskItem>
        <TaskItem><Ico s={16} vb="0 0 16 16"><path d="M.8 12L8 4.500l7.200 7.500" /></Ico></TaskItem>
        <TaskItem $w={14}><Ico s={18} w={16} vb="0 0 16 18"><rect x="2" y="5" width="8.500" height="8.500" rx="1.500" /><path d="M10.500 8.500L14.500 6v6.500l-4-2.500M3 1.500q4-1.500 7 0M3 16.800q4 1 7 0" /></Ico></TaskItem>
        <TaskItem><svg width="21" height="14" viewBox="0 0 21 14"><path d="M5 13a4.500 4.500 0 0 1 0-8.500A6 6 0 0 1 15.500 4 5 5 0 0 1 17 13z" fill="#bdbdbd" /><path d="M6 13q-4-1.500-1-4.500l4-1 5-3 1 3q6 0 5 4-.5 1.500-3 1.500z" fill="#fff" /></svg></TaskItem>
        <TaskItem $w={14}><svg width="22" height="14" viewBox="0 0 22 14"><rect x="5.600" y="3.600" width="14" height="9" fill="none" stroke="#fff" strokeWidth="1.200" /><path d="M7.500 5.500h10.500v5.500H7.500zM20 6h1.500v4H20z" fill="#fff" /><path d="M1 .5v3M5 .5v3M0 3.500h6v2.500H0zM3 6v4" stroke="#fff" fill="#fff" /></svg></TaskItem>
        <TaskItem $w={47}><Ico s={18} vb="0 0 18 18"><path d="M1 17Q1 2 17 2M5 17Q5 6 17 6M9 17q0-7 8-7M13 17q0-3.500 4-3.500" /><circle cx="16" cy="16" r="1" fill="#fff" /></Ico></TaskItem>
        <TaskItem $w={14}><Speaker /></TaskItem>
        <TaskItem $w={56}><Ico s={19} w={31} vb="0 0 31 19" sw={1.200}><rect x=".8" y="1.200" width="29.400" height="16.600" /><path d="M4.500 5.500h22M4.500 9h22" strokeDasharray=".2 2.900" strokeWidth="1.700" /><path d="M4.500 13.500h2M10 13.500h11M25 13.500h1.500" strokeWidth="1.500" /></Ico></TaskItem>
        <TrayText $w={43}>ENG</TrayText>
        <TrayText $w={79}><span>08:53</span><Arabic>ص</Arabic></TrayText>
        <Notifications><svg width="20" height="20" viewBox="0 0 20 20"><path d="M0 0h20v16h-7.500L10 19.500 7.500 16H0z" fill="#fff" /><path d="M4 4h12M4 8h12M4 12h8" stroke="#222" strokeWidth="1.300" /></svg></Notifications>
        <ShowDesktop />
      </Taskbar>
    </Desktop>
  );
}
